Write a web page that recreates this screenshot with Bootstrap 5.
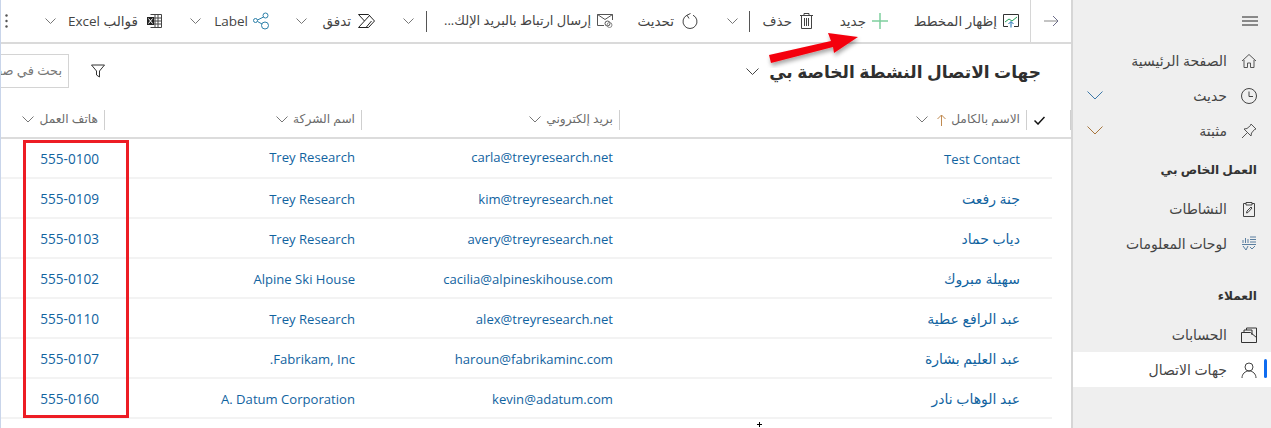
<!DOCTYPE html>
<html lang="ar" dir="rtl">
<head>
  <meta charset="UTF-8" />
  <meta name="viewport" content="width=device-width, initial-scale=1" />
  <title>جهات الاتصال</title>
  <link href="https://cdn.jsdelivr.net/npm/bootstrap@5.3.3/dist/css/bootstrap.min.css" rel="stylesheet" />
  <style>
    html, body { height: 100%; }
    body {
      font-family: "Open Sans", "DejaVu Sans", sans-serif;
      font-size: 13px;
      color: #333;
      background: #fff;
      overflow: hidden;
    }
    .app-shell { height: 428px; position: relative; overflow: hidden; }

    /* sidebar */
    .side-nav { width: 200px; flex: none; background: #efefef; border-left: 2px solid #d6d6d6; }
    .side-burger { height: 43px; padding: 10px 13px 0 0; }
    .side-item { height: 35px; padding: 0 14px 0 0; gap: 14px; position: relative; color: #444; font-size: 14px; }
    .side-item.is-active { background: #fff; }
    .side-item.is-active::before {
      content: ""; position: absolute; right: 4px; top: 7px; width: 3px; height: 19px;
      background: #0f6cf0; border-radius: 2px;
    }
    .side-chev { margin-right: auto; margin-left: 14px; }
    .side-head { font-weight: 600; font-size: 12.2px; color: #333; padding-right: 14px; }
    .side-head-a { height: 43px; padding-top: 2px; }
    .side-head-b { height: 56px; padding-top: 14px; }

    /* main area */
    .main-pane { flex: 1 1 0; min-width: 0; overflow: hidden; border-left: 1px solid #c9d5ea; }

    .cmd-bar { height: 44px; border-bottom: 2px solid #dadada; white-space: nowrap; }
    .cmd { height: 42px; flex: none; gap: 6px; color: #444; font-size: 13.5px; }
    .cmd-back { width: 41px; border-left: 1px solid #d6d6d6; justify-content: center; }
    .cmd-chart { width: 127px; padding-right: 11px; }
    .cmd-new { width: 78px; padding-right: 15px; }
    .cmd-del { width: 75px; padding-right: 12px; gap: 8px; }
    .cmd-sep { width: 1px; height: 21px; background: #555; flex: none; }
    .cmd-chevron { justify-content: center; }
    .cmd-c34 { width: 34px; }
    .cmd-c35 { width: 35px; }
    .cmd-c30 { width: 30px; }
    .cmd-refresh { width: 88px; padding-right: 17px; gap: 8px; }
    .cmd-mail { width: 200px; padding-right: 14px; font-size: 13px; }
    .cmd-flow { width: 75px; padding-right: 16px; gap: 7px; }
    .cmd-label { width: 76px; padding-right: 16px; gap: 5px; }
    .cmd-excel { width: 115px; padding-right: 18px; gap: 9px; }
    .cmd-dots { width: 35px; justify-content: flex-end; padding-left: 5px; }

    .title-row { height: 58px; padding: 0 30px 3px 0; }
    .title-text { font-size: 17px; font-weight: 600; color: #2f2f2f; line-height: 1; }
    .title-chev { margin-right: 10px; }
    .search-zone { margin-right: auto; gap: 22px; margin-left: -12px; margin-bottom: 1px; }
    .search-box {
      width: 80px; height: 34px; border: 1px solid #d4d4d4; padding-right: 6px;
      color: #777; font-size: 13px; overflow: hidden; white-space: nowrap;
    }

    .grid-tbl { table-layout: fixed; width: 1070px; margin: 0; border-collapse: separate; border-spacing: 0; }
    .col-gutter { width: 19px; }
    .col-check { width: 25px; }
    .col-name { width: 407px; }
    .col-mail { width: 258px; }
    .col-firm { width: 257px; }
    .col-phone { width: 104px; }
    .grid-tbl th { height: 37px; padding: 0; font-weight: 400; border-bottom: 2px solid #dcdcdc; }
    .head-cell {
      height: 20px; border-right: 1px solid #cfcfcf; padding: 0 6px 0 0;
      color: #6c6c6c; font-size: 12.2px; gap: 5px;
    }
    .head-grip { height: 20px; border-right: 1px solid #cfcfcf; }
    .grid-tbl td {
      height: 40px; padding: 4px 7px 0; text-align: right; vertical-align: middle;
      border-bottom: 2px solid #f3f3f3; color: #11639f; font-size: 13.1px;
    }
    .grid-tbl td.cell-gutter { border-bottom: 0; padding: 0; }
    .grid-tbl td.cell-big { font-size: 14px; padding-top: 0; }
    .grid-tbl td.cell-phone { font-size: 13.6px; padding: 2px 6px 0 0; }
    .grid-tbl td.cell-raised { padding-top: 0; }

    .note-frame { position: absolute; left: 23px; top: 140px; width: 106px; height: 278px; border: 3px solid #ed1c24; pointer-events: none; }
    .note-arrow { position: absolute; left: 760px; top: 28px; pointer-events: none; }
    .cursor-mark { position: absolute; left: 757px; top: 422px; }
  </style>
</head>
<body>
<div class="app-shell d-flex" dir="rtl">

  <aside class="side-nav">
    <div class="side-burger">
      <svg width="16" height="10" viewBox="0 0 16 10"><path d="M0 1h16M0 5h16M0 9h16" stroke="#222" fill="none"/></svg>
    </div>
    <div class="side-item d-flex align-items-center">
      <svg width="16" height="16" viewBox="0 0 16 16" fill="none" stroke="#555"><path d="M1 8 8 1.500 15 8M3 7v7.500h3.500V10h3v4.500H13V7"/></svg>
      <span>الصفحة الرئيسية</span>
    </div>
    <div class="side-item d-flex align-items-center">
      <svg width="16" height="16" viewBox="0 0 16 16" fill="none" stroke="#444"><circle cx="8" cy="8" r="7.500"/><path d="M8 3.500V8.500H12"/></svg>
      <span>حديث</span>
      <svg class="side-chev" width="16" height="9" viewBox="0 0 16 9" fill="none" stroke="#3d78a8"><path d="M.5.500 8 8 15.500.5"/></svg>
    </div>
    <div class="side-item d-flex align-items-center">
      <svg width="16" height="16" viewBox="0 0 16 16" fill="none" stroke="#555"><path d="M10 1 15 6 13.500 6.500 10.500 10 10 13 3 6 6 5.500 9.500 2.500ZM6.500 9.500 1 15"/></svg>
      <span>مثبتة</span>
      <svg class="side-chev" width="16" height="9" viewBox="0 0 16 9" fill="none" stroke="#a8763d"><path d="M.5.500 8 8 15.500.5"/></svg>
    </div>
    <div class="side-head side-head-a d-flex align-items-center">العمل الخاص بي</div>
    <div class="side-item d-flex align-items-center">
      <svg width="16" height="16" viewBox="0 0 16 16" fill="none" stroke="#444"><path d="M5 2.500H2.500v13h11v-13H11M5 1.500h6v2.500H5ZM5.500 12 6 10l4-4 1 1-4 4.500Z"/></svg>
      <span>النشاطات</span>
    </div>
    <div class="side-item d-flex align-items-center">
      <svg width="16" height="16" viewBox="0 0 16 16" fill="none" stroke="#5a7fa0"><path d="M1 8.500h14M9 1h6M9 3.500h6M9 6h6M2 7V4M4.500 7V2M7 7V3M2 10l3 4 2-4M9 11l2 2 3-3"/></svg>
      <span>لوحات المعلومات</span>
    </div>
    <div class="side-head side-head-b d-flex align-items-center">العملاء</div>
    <div class="side-item d-flex align-items-center">
      <svg width="16" height="16" viewBox="0 0 16 16" fill="none" stroke="#333"><path d="M.5 5.500h9l6 5v5H.5ZM3 5V3h8v5M5.500 3V1h10v10"/></svg>
      <span>الحسابات</span>
    </div>
    <div class="side-item is-active d-flex align-items-center">
      <svg width="16" height="16" viewBox="0 0 16 16" fill="none" stroke="#444"><circle cx="8" cy="5" r="4"/><path d="M1 16c0-4 3-7 7-7s7 3 7 7"/></svg>
      <span>جهات الاتصال</span>
    </div>
  </aside>

  <main class="main-pane">
    <div class="cmd-bar d-flex align-items-center">
      <div class="cmd cmd-back d-flex align-items-center">
        <svg width="15" height="12" viewBox="0 0 15 12" fill="none"><path d="M0 6h13" stroke="#c4c4c4" stroke-width="2"/><path d="M9 1l5 5-5 5" stroke="#6d6d8a"/></svg>
      </div>
      <div class="cmd cmd-chart d-flex align-items-center">
        <svg width="16" height="14" viewBox="0 0 16 14" fill="none"><path d="M.5.500h15v12H11M5 12.500H.5V.500" stroke="#333"/><path d="M2 8l4-3 3 2 5-4" stroke="#1f9d55"/><path d="M8 13.500V8M5.500 10 8 7.500l2.500 2.500" stroke="#1a6fb5"/></svg>
        <span>إظهار المخطط</span>
      </div>
      <div class="cmd cmd-new d-flex align-items-center">
        <svg width="16" height="16" viewBox="0 0 16 16" fill="none" stroke="#7fcf9f" stroke-width="1.500"><path d="M8 0v16M0 8h16"/></svg>
        <span>جديد</span>
      </div>
      <div class="cmd cmd-del d-flex align-items-center">
        <svg width="13" height="16" viewBox="0 0 13 16" fill="none" stroke="#444"><path d="M0 2.500h13M4 2.500V.500h5v2M1.500 2.500v13h10v-13M4.500 5v8M6.500 5v8M8.500 5v8"/></svg>
        <span>حذف</span>
      </div>
      <div class="cmd-sep"></div>
      <div class="cmd cmd-chevron cmd-c34 d-flex align-items-center">
        <svg width="11" height="6" viewBox="0 0 11 6" fill="none" stroke="#777"><path d="M.5.500 5.500 5.500 10.500.5"/></svg>
      </div>
      <div class="cmd cmd-refresh d-flex align-items-center">
        <svg width="16" height="16" viewBox="0 0 16 16" fill="none" stroke="#444"><path d="M5 2.200A7 7 0 1 0 11 2.200M8.500.500 5 2.200 7 5.500"/></svg>
        <span>تحديث</span>
      </div>
      <div class="cmd cmd-mail d-flex align-items-center">
        <svg width="16" height="14" viewBox="0 0 16 14" fill="none" stroke="#555"><path d="M7 11.500H.5V.500h15V6M.5.500 8 5.500 15.500.5"/><circle cx="10.500" cy="9.500" r="2.500" stroke="#555"/><circle cx="12.500" cy="11" r="2.500" stroke="#888"/></svg>
        <span>إرسال ارتباط بالبريد الإلك...</span>
      </div>
      <div class="cmd-sep"></div>
      <div class="cmd cmd-chevron cmd-c35 d-flex align-items-center">
        <svg width="11" height="6" viewBox="0 0 11 6" fill="none" stroke="#777"><path d="M.5.500 5.500 5.500 10.500.5"/></svg>
      </div>
      <div class="cmd cmd-flow d-flex align-items-center">
        <svg width="17" height="14" viewBox="0 0 17 14" fill="none" stroke="#222"><path d="M.5.500H10.500L16.500 7 10.500 13.500H.5L6.500 7ZM6.500 7 12 1M8 13.500 13.500 7"/></svg>
        <span>تدفق</span>
      </div>
      <div class="cmd cmd-chevron cmd-c30 d-flex align-items-center">
        <svg width="11" height="6" viewBox="0 0 11 6" fill="none" stroke="#777"><path d="M.5.500 5.500 5.500 10.500.5"/></svg>
      </div>
      <div class="cmd cmd-label d-flex align-items-center">
        <svg width="17" height="18" viewBox="0 0 17 18" fill="none" stroke="#2b7fa8"><circle cx="12.500" cy="3.500" r="2.500"/><circle cx="2.500" cy="8.500" r="2"/><circle cx="12" cy="13.500" r="3.500"/><path d="M4.500 8 10.500 5M4.500 9.500 9 12"/></svg>
        <span>Label</span>
      </div>
      <div class="cmd cmd-chevron cmd-c30 d-flex align-items-center">
        <svg width="11" height="6" viewBox="0 0 11 6" fill="none" stroke="#777"><path d="M.5.500 5.500 5.500 10.500.5"/></svg>
      </div>
      <div class="cmd cmd-excel d-flex align-items-center">
        <svg width="15" height="14" viewBox="0 0 15 14" fill="none"><path d="M3.500.500h11v13h-11M8 .500v13M11 .500v13M3.500 4h11M3.500 7h11M3.500 10h11" stroke="#444"/><rect x="0" y="3" width="7" height="8" fill="#222"/><path d="M1.500 4.500l4 5M5.500 4.500l-4 5" stroke="#fff"/></svg>
        <span>قوالب Excel</span>
      </div>
      <div class="cmd cmd-chevron cmd-c30 d-flex align-items-center">
        <svg width="11" height="6" viewBox="0 0 11 6" fill="none" stroke="#777"><path d="M.5.500 5.500 5.500 10.500.5"/></svg>
      </div>
      <div class="cmd cmd-dots d-flex align-items-center">
        <svg width="3" height="14" viewBox="0 0 3 14" fill="#555"><circle cx="1.500" cy="1.500" r="1.200"/><circle cx="1.500" cy="7" r="1.200"/><circle cx="1.500" cy="12.500" r="1.200"/></svg>
      </div>
    </div>

    <div class="title-row d-flex align-items-center">
      <span class="title-text">جهات الاتصال النشطة الخاصة بي</span>
      <svg class="title-chev" width="13" height="7" viewBox="0 0 13 7" fill="none" stroke="#444"><path d="M.5.500 6.500 6.500 12.500.5"/></svg>
      <div class="search-zone d-flex align-items-center">
        <svg width="14" height="14" viewBox="0 0 14 14" fill="none" stroke="#333"><path d="M.5 1h13L8.500 7v6l-3-2V7Z"/></svg>
        <div class="search-box d-flex align-items-center">بحث في صف</div>
      </div>
    </div>

    <table class="grid-tbl">
      <colgroup>
        <col class="col-gutter"><col class="col-check"><col class="col-name"><col class="col-mail"><col class="col-firm"><col class="col-phone">
      </colgroup>
      <thead>
        <tr>
          <th><div class="head-grip"></div></th>
          <th class="text-center"><svg width="11" height="9" viewBox="0 0 11 9" fill="none" stroke="#111" stroke-width="1.500"><path d="M.5 4.500 4 8 10.500 1"/></svg></th>
          <th><div class="head-cell d-flex align-items-center"><span>الاسم بالكامل</span><svg width="9" height="12" viewBox="0 0 9 12" fill="none" stroke="#c08a50"><path d="M4.500 12V1M.5 5l4-4 4 4"/></svg><svg class="me-1" width="12" height="7" viewBox="0 0 12 7" fill="none" stroke="#777"><path d="M.5.500 6 6 11.500.5"/></svg></div></th>
          <th><div class="head-cell d-flex align-items-center"><span>بريد إلكتروني</span><svg width="12" height="7" viewBox="0 0 12 7" fill="none" stroke="#777"><path d="M.5.500 6 6 11.500.5"/></svg></div></th>
          <th><div class="head-cell d-flex align-items-center"><span>اسم الشركة</span><svg width="12" height="7" viewBox="0 0 12 7" fill="none" stroke="#777"><path d="M.5.500 6 6 11.500.5"/></svg></div></th>
          <th><div class="head-cell d-flex align-items-center"><span>هاتف العمل</span><svg width="12" height="7" viewBox="0 0 12 7" fill="none" stroke="#777"><path d="M.5.500 6 6 11.500.5"/></svg></div></th>
        </tr>
      </thead>
      <tbody>
        <tr><td class="cell-gutter"></td><td></td><td>Test Contact</td><td class="cell-raised">carla@treyresearch.net</td><td class="cell-raised">Trey Research</td><td class="cell-phone">555-0100</td></tr>
        <tr><td class="cell-gutter"></td><td></td><td class="cell-big">جنة رفعت</td><td>kim@treyresearch.net</td><td>Trey Research</td><td class="cell-phone">555-0109</td></tr>
        <tr><td class="cell-gutter"></td><td></td><td class="cell-big">دياب حماد</td><td>avery@treyresearch.net</td><td>Trey Research</td><td class="cell-phone">555-0103</td></tr>
        <tr><td class="cell-gutter"></td><td></td><td class="cell-big">سهيلة مبروك</td><td>cacilia@alpineskihouse.com</td><td>Alpine Ski House</td><td class="cell-phone">555-0102</td></tr>
        <tr><td class="cell-gutter"></td><td></td><td class="cell-big">عبد الرافع عطية</td><td>alex@treyresearch.net</td><td>Trey Research</td><td class="cell-phone">555-0110</td></tr>
        <tr><td class="cell-gutter"></td><td></td><td class="cell-big">عبد العليم بشارة</td><td>haroun@fabrikaminc.com</td><td>Fabrikam, Inc.</td><td class="cell-phone">555-0107</td></tr>
        <tr><td class="cell-gutter"></td><td></td><td class="cell-big">عبد الوهاب نادر</td><td>kevin@adatum.com</td><td>A. Datum Corporation</td><td class="cell-phone">555-0160</td></tr>
      </tbody>
    </table>
  </main>

  <div class="note-frame"></div>
  <svg class="note-arrow" width="105" height="40" viewBox="0 0 105 40">
    <defs><filter id="arrow-shadow" x="-10%" y="-30%" width="130%" height="180%"><feDropShadow dx="1" dy="3" stdDeviation="2" flood-color="#000" flood-opacity=".35"/></filter></defs>
    <path d="M9 27 71 13 68 5 98 9 74 25 73 19 11 35Z" fill="#f4000c" filter="url(#arrow-shadow)"/>
  </svg>
  <svg class="cursor-mark" width="5" height="5" viewBox="0 0 5 5"><path d="M2.500 0v5M0 2.500h5" stroke="#000"/></svg>
</div>
<script src="https://cdn.jsdelivr.net/npm/bootstrap@5.3.3/dist/js/bootstrap.bundle.min.js"></script>
</body>
</html>
